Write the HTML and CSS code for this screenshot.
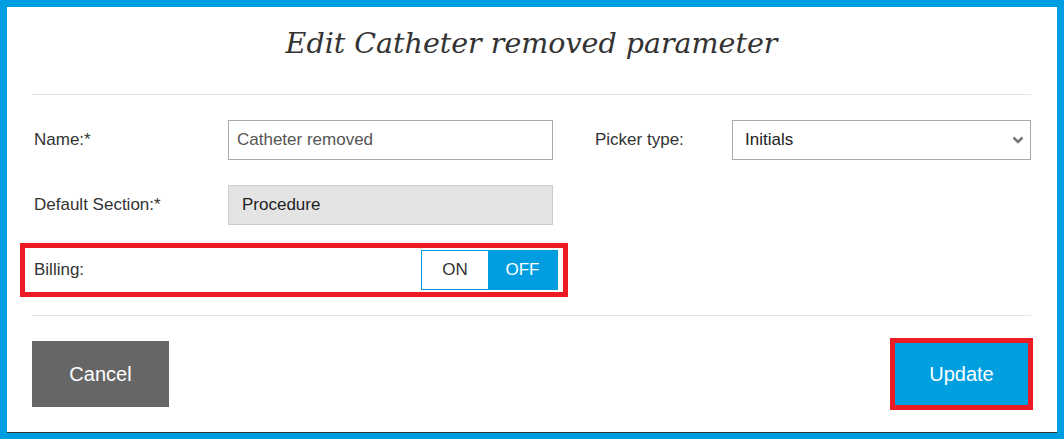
FILE: index.html
```html
<!DOCTYPE html>
<html>
<head>
<meta charset="utf-8">
<link rel="stylesheet" href="styles.css">
</head>
<body>
<div class="modal">
  <div class="modal-header">
    <h1 class="title">Edit Catheter removed parameter</h1>
  </div>
  <div class="modal-body">
    <div class="rows">
      <div class="row">
        <label class="label">Name:*</label>
        <div class="input">Catheter removed</div>
        <label class="label label-right">Picker type:</label>
        <div class="select">
          <span>Initials</span>
          <svg class="chevron" width="12" height="8" viewBox="0 0 12 8"><polyline points="1.5,1.5 6,6 10.5,1.5" fill="none" stroke="#777" stroke-width="2.6"/></svg>
        </div>
      </div>
      <div class="row">
        <label class="label">Default Section:*</label>
        <div class="input input-disabled">Procedure</div>
      </div>
    </div>
    <div class="billing">
      <span class="label">Billing:</span>
      <div class="toggle">
        <span class="opt opt-on">ON</span>
        <span class="opt opt-off">OFF</span>
      </div>
    </div>
  </div>
  <div class="modal-footer">
    <button class="btn btn-cancel">Cancel</button>
    <button class="btn btn-update">Update</button>
  </div>
</div>
</body>
</html>
```

FILE: styles.css
```css
html, body {
  margin: 0;
  padding: 0;
}
body {
  background: #009ee0;
  height: 439px;
  overflow: hidden;
  font-family: "Liberation Sans", Arial, sans-serif;
}
.modal {
  margin: 7px 7px 0;
  height: 426px;
  box-sizing: border-box;
  background: #fff;
  border-bottom: 1px solid #333;
  padding: 0 26px 0 25px;
}
.modal-header {
  padding: 17px 0 30px;
  border-bottom: 1px solid #e3e3e3;
  text-align: center;
}
.title {
  margin: 0;
  font-family: "DejaVu Serif", serif;
  font-style: italic;
  font-weight: 400;
  font-size: 28.5px;
  line-height: 40px;
  color: #333;
}
.modal-body {
  padding: 25px 0 21px;
  border-bottom: 1px solid #e3e3e3;
}
.rows {
  display: flex;
  flex-direction: column;
  gap: 25px;
}
.row {
  display: flex;
  align-items: center;
  height: 40px;
}
.label {
  width: 196px;
  padding-left: 2px;
  box-sizing: border-box;
  font-size: 17px;
  color: #333;
}
.label-right {
  width: 138px;
  margin-left: 41px;
  padding-left: 1px;
}
.input {
  width: 325px;
  height: 40px;
  box-sizing: border-box;
  border: 1px solid #aaa;
  padding-left: 8px;
  display: flex;
  align-items: center;
  font-size: 17px;
  color: #555;
}
.input-disabled {
  background: #e4e4e4;
  border-color: #ccc;
  color: #222;
  padding-left: 13px;
}
.select {
  width: 299px;
  height: 40px;
  box-sizing: border-box;
  border: 1px solid #aaa;
  padding: 0 6px 0 12px;
  display: flex;
  align-items: center;
  justify-content: space-between;
  font-size: 17px;
  color: #222;
}
.chevron {
  display: block;
}
.billing {
  display: flex;
  align-items: center;
  justify-content: space-between;
  width: 542px;
  height: 48px;
  box-sizing: border-box;
  margin: 21px 0 0 -9px;
  padding: 0 7px 0 9px;
  outline: 5px solid #ed1c24;
  outline-offset: -2px;
}
.toggle {
  display: flex;
  width: 137px;
  height: 40px;
  box-sizing: border-box;
  border: 1px solid #009ee0;
}
.opt {
  display: flex;
  align-items: center;
  justify-content: center;
  font-size: 17px;
}
.opt-on {
  width: 66px;
  color: #333;
  background: #fff;
}
.opt-off {
  flex: 1;
  color: #fff;
  background: #009ee0;
}
.modal-footer {
  display: flex;
  justify-content: space-between;
  padding: 25px 1px 0 0;
}
.btn {
  width: 137px;
  height: 66px;
  border: 0;
  padding: 0;
  font-family: "Liberation Sans", Arial, sans-serif;
  font-size: 20px;
  color: #fff;
}
.btn-cancel {
  background: #666;
}
.btn-update {
  background: #009fdf;
  outline: 5px solid #ed1c24;
  outline-offset: -2px;
}
```
